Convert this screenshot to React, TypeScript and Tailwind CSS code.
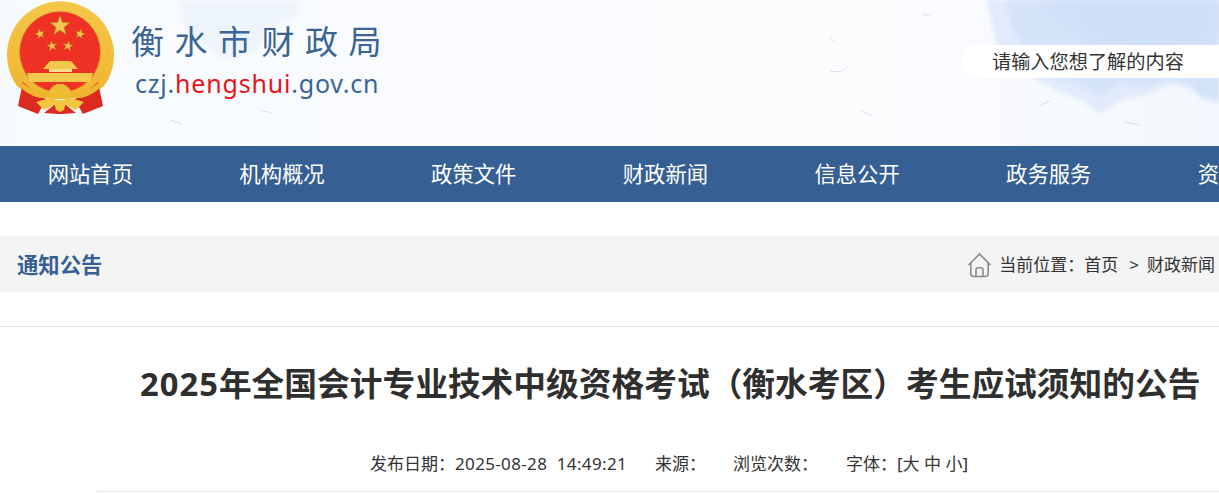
const nav = ["网站首页", "机构概况", "政策文件", "财政新闻", "信息公开", "政务服务", "资料下载"];

function Emblem() {
  const star = (cx: number, cy: number, r: number, rot = 0) => {
    const pts: string[] = [];
    for (let i = 0; i < 10; i++) {
      const rad = i % 2 === 0 ? r : r * 0.4;
      const a = (-90 + rot + i * 36) * (Math.PI / 180);
      pts.push(`${(cx + rad * Math.cos(a)).toFixed(2)},${(cy + rad * Math.sin(a)).toFixed(2)}`);
    }
    return <polygon points={pts.join(" ")} fill="#f3c64e" stroke="#b9802a" strokeWidth="0.6" />;
  };
  const teeth = Array.from({ length: 11 }, (_, i) => {
    const a = (-170 + i * 16) * (Math.PI / 180);
    return <circle key={i} cx={60 + 10 * Math.cos(a)} cy={95 + 10 * Math.sin(a)} r="1.6" fill="#f0bc36" />;
  });
  return (
    <svg width="125" height="120" viewBox="0 0 125 120" className="shrink-0 blur-[0.4px]">
      <defs>
        <linearGradient id="g" x1="0" y1="0" x2="0" y2="1">
          <stop offset="0" stopColor="#f5c84a" />
          <stop offset="1" stopColor="#efb52f" />
        </linearGradient>
      </defs>
      <path d="M17 86 A53.5 53.5 0 1 1 104 86 Q88 100 72 97 L49 97 Q33 100 17 86 Z" fill="url(#g)" />
      <circle cx="60.5" cy="52" r="47" fill="none" stroke="#e5a72a" strokeWidth="1" strokeDasharray="2 2" opacity="0.5" />
      <circle cx="60" cy="52" r="40.5" fill="#ee3124" stroke="#d8962a" strokeWidth="0.8" />
      {star(60, 26, 10.5)}
      {star(40, 34, 5.2, -15)}
      {star(80, 34, 5.2, 15)}
      {star(52, 46, 5.2, -10)}
      {star(68, 46, 5.2, 10)}
      <path d="M50 61 H71 L78 69 H43 Z" fill="#f3c64e" />
      <rect x="49" y="69" width="23" height="3" fill="#f8dc8a" />
      <path d="M27 73 H93 L90 82 H30 Z" fill="#f4c94e" />
      <path d="M23 82 L18 106 L38 114 L42 107 L48 100 L36 94 Z" fill="#dc2a20" />
      <path d="M98 82 L103 106 L83 114 L79 107 L73 100 L85 94 Z" fill="#dc2a20" />
      <path d="M23 83 Q38 96 50 94 L50 98 Q34 100 21 88 Z" fill="#efb52f" />
      <path d="M98 83 Q83 96 71 94 L71 98 Q87 100 100 88 Z" fill="#efb52f" />
      {teeth}
      <path d="M49 96 A11 11 0 0 1 71 96 L71 99 H49 Z" fill="#f0bc36" />
      <path d="M36 102 L50 98 L60 101 L70 98 L84 102 L76 110 L66 105 L54 105 L44 110 Z" fill="#f4c53f" />
      <path d="M44 113 L54 105 H66 L76 113 L62 114 H58 Z" fill="#dc2a20" />
      <path d="M54 102 L60 100 L66 102 L64 110 L60 112 L56 110 Z" fill="#f4c53f" />
    </svg>
  );
}

function HeaderArt() {
  return (
    <svg className="absolute inset-0 h-full w-full" viewBox="0 0 1219 146" preserveAspectRatio="none">
      <defs>
        <filter id="soft"><feGaussianBlur stdDeviation="2" /></filter>
        <filter id="softer"><feGaussianBlur stdDeviation="8" /></filter>
        <linearGradient id="wash" x1="0" y1="0" x2="1" y2="0">
          <stop offset="0" stopColor="#f8fbfe" />
          <stop offset="0.72" stopColor="#fbfcfe" />
          <stop offset="1" stopColor="#f3f7fd" />
        </linearGradient>
      </defs>
      <rect width="1219" height="146" fill="url(#wash)" />
      <path d="M178 0 L300 0 L296 16 L268 28 L256 52 L226 60 L206 46 L186 32 Z" fill="#eef4fb" filter="url(#soft)" />
      <path d="M987 0 H1219 V104 L1205 100 L1190 88 L1170 84 L1150 94 L1120 100 L1100 114 L1082 100 L1060 92 L1040 82 L1015 66 L996 44 Z" fill="#e1ebfb" filter="url(#soft)" />
      <path d="M1006 0 H1219 V100 L1203 98 L1190 84 L1165 80 L1148 88 L1120 84 L1100 97 L1082 86 L1060 80 L1032 60 L1012 30 Z" fill="#d5e3f9" filter="url(#soft)" />
      <path d="M1040 0 H1219 V40 L1150 60 L1090 40 Z" fill="#d0dff8" filter="url(#softer)" />
      <g stroke="#cfd6df" strokeWidth="1" fill="none" opacity="0.7">
        <path d="M830 38 L836 43" /><path d="M830 71 Q842 74 848 66" /><path d="M860 110 L872 116" />
        <path d="M1040 105 L1050 101" /><path d="M1125 122 L1140 125" /><path d="M1116 34 L1126 22" />
        <path d="M1012 22 L1020 28" /><path d="M922 14 L930 16" /><path d="M170 120 L182 124" /><path d="M260 110 L272 113" />
      </g>
    </svg>
  );
}

export default function App() {
  return (
    <div className="h-[493px] w-[1219px] overflow-hidden bg-white font-['Noto_Sans','Noto_Sans_CJK_SC',sans-serif] text-[#333]">
      <header className="relative flex h-[146px] items-start justify-between">
        <HeaderArt />
        <div className="relative flex">
          <Emblem />
          <div className="pl-[7px] pt-[18px]">
            <div className="-ml-px h-[45px] text-[33px] leading-[45px] tracking-[10.5px] text-[#3a6595] font-['Noto_Sans_CJK_SC',sans-serif] font-normal">衡水市财政局</div>
            <div className="mt-[3px] pl-[3px] text-[25px] leading-[34px] tracking-[0.8px] text-[#3a6595]">
              czj.<span className="text-[#e8141c]">hengshui</span>.gov.cn
            </div>
          </div>
        </div>
        <div className="relative mt-[45px] h-[33px] w-[257px] rounded-l-full bg-white pl-[30px]">
          <input
            readOnly
            placeholder="请输入您想了解的内容"
            className="h-full w-full bg-transparent text-[19.2px] outline-none placeholder:text-[#333]"
          />
        </div>
      </header>

      <nav className="flex h-[56px] items-center overflow-hidden bg-[#365f93]">
        {nav.map((n, i) => (
          <a key={n} className={`w-[191.7px] shrink-0 text-center text-[21.33px] leading-[56px] text-white ${i === 0 ? "-ml-[5.5px]" : ""}`}>{n}</a>
        ))}
      </nav>

      <div className="mt-[34px] flex h-[56px] items-center justify-between bg-[#f4f4f4] pl-[17px] pr-[4px]">
        <h2 className="translate-y-px text-[21.33px] font-bold text-[#365f93]">通知公告</h2>
        <div className="flex translate-y-px items-center text-[17px] text-[#333]">
          <svg width="25" height="26" viewBox="0 0 25 26" fill="none" stroke="#8a8a8a" strokeWidth="1.6" className="mr-[7px]">
            <path d="M1.5 13 L12.5 2 L23.5 13" />
            <path d="M3.8 11 V21.5 Q3.8 24.5 7 24.5 H18 Q21.2 24.5 21.2 21.5 V11" />
            <path d="M9 24.5 V18 Q9 15.8 11 15.8 H14 Q16 15.8 16 18 V24.5" />
          </svg>
          <span>当前位置：</span>
          <span>首页</span>
          <span className="ml-[11px]">&gt;</span>
          <span className="ml-[8px]">财政新闻</span>
        </div>
      </div>

      <div className="mt-[34px] h-px bg-[#e5e5e5]" />

      <main className="ml-[97px]">
        <h1 className="mt-[33px] pl-[43px] text-[32.73px] leading-[48px] font-bold whitespace-nowrap text-[#2f2f2f]">
          <span className="tracking-[1px]">2025</span>年全国会计专业技术中级资格考试（衡水考区）考生应试须知的公告
        </h1>
        <div className="mt-[44px] flex h-[24px] items-center pl-[273px] text-[17px] leading-[24px] whitespace-pre text-[#333]">
          <span className="w-[285px]">发布日期：<span className="tracking-[0.35px]">2025-08-28  14:49:21</span></span>
          <span className="w-[78px]">来源：</span>
          <span className="w-[113px]">浏览次数：</span>
          <span>字体：[大 中 小]</span>
        </div>
        <div className="mt-[15px] h-px bg-[#e5e5e5]" />
      </main>
    </div>
  );
}
